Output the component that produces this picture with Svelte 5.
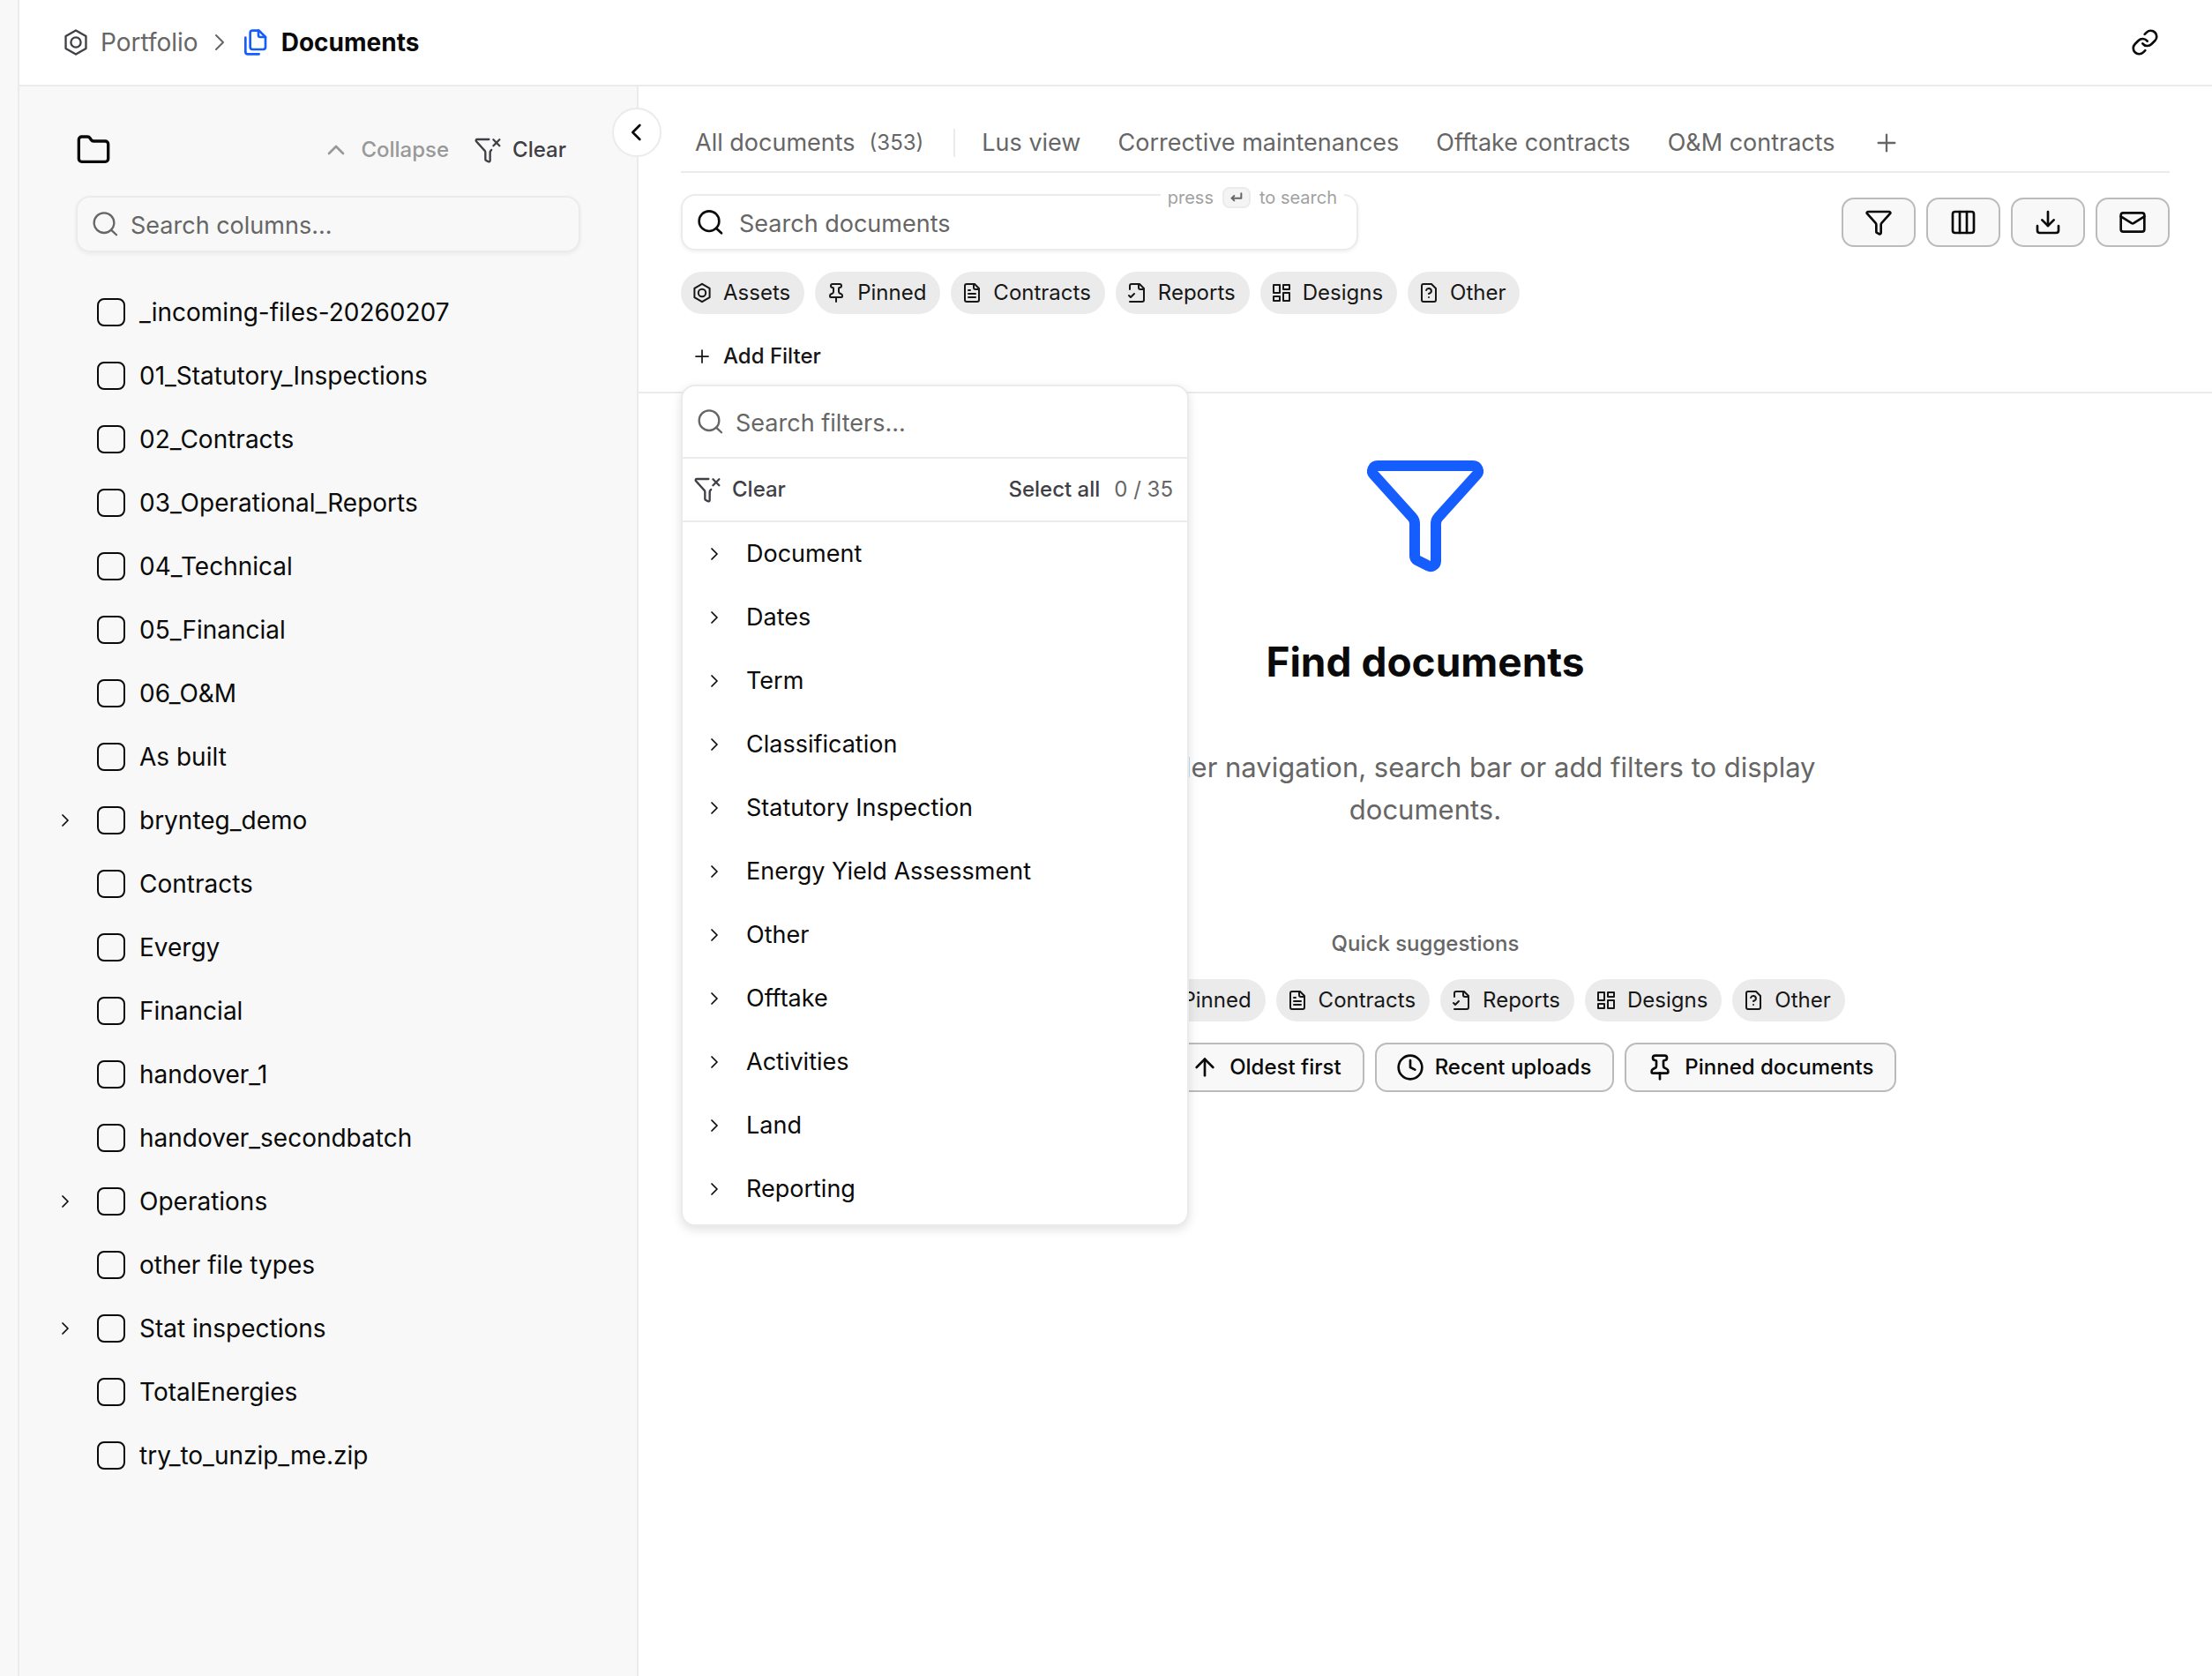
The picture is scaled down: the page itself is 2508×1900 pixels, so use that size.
<script>
	let folders = [
		{ name: '_incoming-files-20260207' },
		{ name: '01_Statutory_Inspections' },
		{ name: '02_Contracts' },
		{ name: '03_Operational_Reports' },
		{ name: '04_Technical' },
		{ name: '05_Financial' },
		{ name: '06_O&M' },
		{ name: 'As built' },
		{ name: 'brynteg_demo', children: true },
		{ name: 'Contracts' },
		{ name: 'Evergy' },
		{ name: 'Financial' },
		{ name: 'handover_1' },
		{ name: 'handover_secondbatch' },
		{ name: 'Operations', children: true },
		{ name: 'other file types' },
		{ name: 'Stat inspections', children: true },
		{ name: 'TotalEnergies' },
		{ name: 'try_to_unzip_me.zip' }
	];
	let chips = [
		{ icon: 'asset', label: 'Assets' },
		{ icon: 'pin', label: 'Pinned' },
		{ icon: 'file', label: 'Contracts' },
		{ icon: 'fileCheck', label: 'Reports' },
		{ icon: 'grid', label: 'Designs' },
		{ icon: 'fileQuestion', label: 'Other' }
	];
	let tabs = ['Lus view', 'Corrective maintenances', 'Offtake contracts', 'O&M contracts'];
	let tools = [
		{ icon: 'filter', label: 'Filter' },
		{ icon: 'columns', label: 'Columns' },
		{ icon: 'download', label: 'Download' },
		{ icon: 'mail', label: 'Mail' }
	];
	let filterGroups = ['Document', 'Dates', 'Term', 'Classification', 'Statutory Inspection', 'Energy Yield Assessment', 'Other', 'Offtake', 'Activities', 'Land', 'Reporting'];
	let quickActions = [
		{ icon: 'arrowDown', label: 'Newest first' },
		{ icon: 'arrowUp', label: 'Oldest first' },
		{ icon: 'clock', label: 'Recent uploads' },
		{ icon: 'pin', label: 'Pinned documents' }
	];

	// every icon is drawn on a 24x24 grid
	const icons = {
		asset: ['M12 1.8 20.6 6.8V17.2L12 22.2 3.4 17.2V6.8Z', 'M12 7.8a4.2 4.2 0 1 0 0 8.4a4.2 4.2 0 1 0 0-8.4Z'],
		copy: ['M14.5 2H10a2 2 0 0 0-2 2v12a2 2 0 0 0 2 2h9a2 2 0 0 0 2-2V7.5L15.5 2Z', 'M15 2v4a1.5 1.5 0 0 0 1.5 1.5h4.5', 'M4 8v12a2 2 0 0 0 2 2h9.5'],
		folder: ['M20 20a2 2 0 0 0 2-2V8a2 2 0 0 0-2-2h-7.9a2 2 0 0 1-1.7-.9L9.6 3.9A2 2 0 0 0 7.9 3H4a2 2 0 0 0-2 2v13a2 2 0 0 0 2 2Z'],
		search: ['M10.5 2.5a8.5 8.5 0 1 0 0 17a8.5 8.5 0 1 0 0-17Z', 'M16.5 17l4.5 4.2'],
		right: ['M9 18l6-6-6-6'],
		left: ['M14.5 18l-6-6 6-6'],
		up: ['M18 15l-6-6-6 6'],
		plus: ['M5 12h14', 'M12 5v14'],
		filter: ['M10 20a1 1 0 0 0 .55.9l2 1A1 1 0 0 0 14 21v-7a2 2 0 0 1 .52-1.34L21.74 4.67A1 1 0 0 0 21 3H3a1 1 0 0 0-.74 1.67l7.22 7.99A2 2 0 0 1 10 14Z'],
		filterX: ['M13 3H3a1 1 0 0 0-.74 1.67l7.22 7.99A2 2 0 0 1 10 14v6a1 1 0 0 0 .55.9l2 1A1 1 0 0 0 14 21v-7a2 2 0 0 1 .52-1.34l.6-.67', 'M16.8 3.2l5.2 5.2', 'M22 3.2l-5.2 5.2'],
		pin: ['M12 17v5', 'M9 10.8a2 2 0 0 1-1.1 1.8l-1.8.9A2 2 0 0 0 5 15.2V16a1 1 0 0 0 1 1h12a1 1 0 0 0 1-1v-.8a2 2 0 0 0-1.1-1.8l-1.8-.9A2 2 0 0 1 15 10.8V7a1 1 0 0 1 1-1 2 2 0 0 0 0-4H8a2 2 0 0 0 0 4 1 1 0 0 1 1 1Z'],
		file: ['M15 2H6a2 2 0 0 0-2 2v16a2 2 0 0 0 2 2h12a2 2 0 0 0 2-2V7Z', 'M14 2v4a2 2 0 0 0 2 2h4', 'M10 9H8', 'M16 13H8', 'M16 17H8'],
		fileCheck: ['M4 22h14a2 2 0 0 0 2-2V7l-5-5H6a2 2 0 0 0-2 2v4', 'M14 2v4a2 2 0 0 0 2 2h4', 'M3 15l2 2 4-4'],
		grid: ['M3 3h7v9H3Z', 'M14 3h7v5h-7Z', 'M14 12h7v9h-7Z', 'M3 16h7v5H3Z'],
		fileQuestion: ['M15 2H6a2 2 0 0 0-2 2v16a2 2 0 0 0 2 2h12a2 2 0 0 0 2-2V7Z', 'M12 17h.01', 'M9.1 9a3 3 0 0 1 5.82 1c0 2-3 3-3 3'],
		columns: ['M5 3h14a2 2 0 0 1 2 2v14a2 2 0 0 1-2 2H5a2 2 0 0 1-2-2V5a2 2 0 0 1 2-2Z', 'M9 3v18', 'M15 3v18'],
		download: ['M12 3v12', 'M7 10l5 5 5-5', 'M3 15v4a2 2 0 0 0 2 2h14a2 2 0 0 0 2-2v-4'],
		mail: ['M4 4h16a2 2 0 0 1 2 2v12a2 2 0 0 1-2 2H4a2 2 0 0 1-2-2V6a2 2 0 0 1 2-2Z', 'M22 7l-9 5.7a2 2 0 0 1-2 0L2 7'],
		link: ['M10 13a5 5 0 0 0 7.54.54l3-3a5 5 0 0 0-7.07-7.07l-1.72 1.71', 'M14 11a5 5 0 0 0-7.54-.54l-3 3a5 5 0 0 0 7.07 7.07l1.71-1.71'],
		arrowUp: ['M5 12l7-7 7 7', 'M12 19V5'],
		arrowDown: ['M12 5v14', 'M19 12l-7 7-7-7'],
		clock: ['M12 2a10 10 0 1 0 0 20a10 10 0 1 0 0-20Z', 'M12 6v6l4 2'],
		enter: ['M20 5v8H4', 'M8 9l-4 4 4 4']
	};
</script>

{#snippet icon(name, size, stroke = 1.75)}
	<svg class="icon" width={size} height={size} viewBox="0 0 24 24" stroke-width={stroke} aria-hidden="true">
		{#each icons[name] as d}
			<path {d} />
		{/each}
	</svg>
{/snippet}

{#snippet chipRow()}
	<div class="chips">
		{#each chips as chip}
			<button class="chip">{@render icon(chip.icon, 24, 2)}{chip.label}</button>
		{/each}
	</div>
{/snippet}

<div class="app">
	<div class="rail"></div>
	<div class="page">
		<header>
			<nav class="crumbs" aria-label="Breadcrumb">
				<a href="#portfolio">{@render icon('asset', 32)}Portfolio</a>
				<span class="sep">{@render icon('right', 32, 1.5)}</span>
				<a class="current" href="#documents">{@render icon('copy', 32, 2)}<span>Documents</span></a>
			</nav>
			<button class="plain" aria-label="Copy link">{@render icon('link', 32, 2)}</button>
		</header>

		<div class="body">
			<aside>
				<button class="toggle" aria-label="Hide folders">{@render icon('left', 32, 2)}</button>
				<div class="side-head">
					{@render icon('folder', 40, 2)}
					<div class="side-actions">
						<button class="plain muted" disabled>{@render icon('up', 32, 2)}Collapse</button>
						<button class="plain clear">{@render icon('filterX', 32)}Clear</button>
					</div>
				</div>
				<label class="field side-search">
					{@render icon('search', 32)}
					<input type="text" placeholder="Search columns..." aria-label="Search columns" />
				</label>
				<ul class="tree">
					{#each folders as folder}
						<li>
							{#if folder.children}
								<button class="plain expand" aria-label="Expand {folder.name}">{@render icon('right', 24)}</button>
							{:else}
								<span class="expand"></span>
							{/if}
							<label><input type="checkbox" />{folder.name}</label>
						</li>
					{/each}
				</ul>
			</aside>

			<main>
				<section class="top">
					<nav class="tabs" aria-label="Views">
						<a class="all" href="#all">All documents <span class="count">(353)</span></a>
						{#each tabs as tab}
							<a href="#view">{tab}</a>
						{/each}
						<button class="plain" aria-label="Add view">{@render icon('plus', 32)}</button>
					</nav>
					<div class="bar">
						<label class="field doc-search">
							{@render icon('search', 32, 2)}
							<input type="text" placeholder="Search documents" aria-label="Search documents" />
							<span class="hint">press <kbd>{@render icon('enter', 16, 3)}</kbd> to search</span>
						</label>
						<div class="tools">
							{#each tools as tool}
								<button class="box" aria-label={tool.label}>{@render icon(tool.icon, 32, 2)}</button>
							{/each}
						</div>
					</div>
					{@render chipRow()}
					<div class="add-wrap">
						<button class="plain add">{@render icon('plus', 24)}Add Filter</button>
						<div class="menu">
							<label class="menu-search">
								{@render icon('search', 32)}
								<input type="text" placeholder="Search filters..." aria-label="Search filters" />
							</label>
							<div class="menu-actions">
								<button class="plain clear">{@render icon('filterX', 32)}Clear</button>
								<button class="plain select-all">Select all</button>
								<span>0 / 35</span>
							</div>
							{#each filterGroups as group}
								<button class="group">{@render icon('right', 24)}{group}</button>
							{/each}
						</div>
					</div>
				</section>

				<section class="empty">
					<div class="hero">{@render icon('filter', 144, 2)}</div>
					<h1>Find documents</h1>
					<p>Use the folder navigation, search bar or add filters to display documents.</p>
					<h2>Quick suggestions</h2>
					{@render chipRow()}
					<div class="quick">
						{#each quickActions as action}
							<button class="box">{@render icon(action.icon, 32, 2)}{action.label}</button>
						{/each}
					</div>
				</section>
			</main>
		</div>
	</div>
</div>

<style>
	:global(body) {
		background: #fff;
	}
	.app {
		display: flex;
		min-height: 100vh;
		font-family: Inter, "Liberation Sans", sans-serif;
		font-size: 27px;
		line-height: 40px;
		color: #0a0a0a;
	}
	.app * {
		box-sizing: border-box;
	}
	button,
	input {
		font: inherit;
		color: inherit;
	}
	button {
		display: flex;
		align-items: center;
		cursor: pointer;
		white-space: nowrap;
	}
	a {
		color: inherit;
		text-decoration: none;
		white-space: nowrap;
	}
	.icon {
		flex: none;
		display: block;
		fill: none;
		stroke: currentColor;
		stroke-linecap: round;
		stroke-linejoin: round;
	}
	.plain {
		padding: 0;
		border: 0;
		background: none;
	}
	.rail {
		flex: none;
		width: 22px;
		background: #f8f8f8;
		border-right: 2px solid #ebebeb;
	}
	.page {
		flex: 1;
		display: flex;
		flex-direction: column;
		min-width: 0;
	}
	header {
		display: flex;
		align-items: center;
		justify-content: space-between;
		height: 98px;
		padding: 0 60px 0 48px;
		border-bottom: 2px solid #ebebeb;
		font-size: 28px;
	}
	.crumbs,
	.crumbs a {
		display: flex;
		align-items: center;
	}
	.crumbs {
		gap: 8px;
	}
	.crumbs a {
		gap: 12px;
		color: #666;
	}
	.crumbs a .icon {
		color: #3f3f46;
	}
	.crumbs .sep {
		color: #666;
	}
	.crumbs .current {
		gap: 14px;
		color: #0a0a0a;
		font-weight: 700;
	}
	.crumbs .current .icon {
		color: #155dfc;
	}
	.body {
		flex: 1;
		display: flex;
	}
	aside {
		position: relative;
		flex: none;
		width: 702px;
		padding: 40px 64px 48px 48px;
		background: #f8f8f8;
		border-right: 2px solid #ebebeb;
	}
	.toggle {
		position: absolute;
		top: 24px;
		right: -28px;
		justify-content: center;
		width: 56px;
		height: 56px;
		padding: 0;
		border: 2px solid #ebebeb;
		border-radius: 50%;
		background: #fff;
	}
	.side-head {
		display: flex;
		align-items: center;
		justify-content: space-between;
		height: 64px;
		padding: 0 16px;
	}
	.side-actions {
		display: flex;
		gap: 28px;
		font-size: 24px;
		font-weight: 500;
	}
	.side-actions button {
		gap: 12px;
	}
	.muted {
		color: #999;
	}
	.clear,
	.select-all {
		color: #3f3f46;
	}
	.field {
		display: flex;
		align-items: center;
		gap: 12px;
		height: 64px;
		padding: 0 16px;
		border: 2px solid #ebebeb;
		border-radius: 16px;
		box-shadow: 0 2px 4px rgba(0, 0, 0, 0.06);
	}
	.field input,
	.menu-search input {
		flex: 1;
		min-width: 0;
		padding: 4px 0 0;
		border: 0;
		outline: 0;
		background: none;
	}
	input::placeholder {
		color: #666;
		opacity: 1;
	}
	.side-search {
		margin: 20px 0 32px 16px;
		color: #666;
	}
	.tree {
		margin: 0 0 0 -8px;
		padding: 0;
		list-style: none;
		font-size: 28px;
	}
	.tree li,
	.tree label {
		display: flex;
		align-items: center;
		height: 72px;
	}
	.tree label {
		gap: 16px;
	}
	.expand {
		width: 48px;
	}
	.tree input {
		appearance: none;
		width: 32px;
		height: 32px;
		margin: 0;
		border: 2px solid #0a0a0a;
		border-radius: 8px;
	}
	main {
		flex: 1;
		min-width: 0;
	}
	.top {
		padding: 32px 48px 16px;
		border-bottom: 2px solid #ebebeb;
	}
	.tabs {
		display: flex;
		align-items: center;
		gap: 42px;
		height: 66px;
		padding: 0 16px;
		border-bottom: 2px solid #ebebeb;
		color: #666;
	}
	.tabs .all {
		display: flex;
		gap: 16px;
		padding-right: 34px;
		margin-right: -12px;
		border-right: 2px solid #ebebeb;
		line-height: 32px;
	}
	.count {
		font-size: 24px;
	}
	.bar {
		display: flex;
		align-items: center;
		justify-content: space-between;
		margin: 24px 0;
	}
	.doc-search {
		position: relative;
		gap: 16px;
		width: 768px;
	}
	.doc-search > .icon {
		color: #0a0a0a;
	}
	.hint {
		position: absolute;
		top: -14px;
		right: 14px;
		display: flex;
		align-items: center;
		gap: 10px;
		padding: 0 8px;
		background: #fff;
		color: #a1a1a1;
		font-size: 20px;
		line-height: 32px;
	}
	kbd {
		display: flex;
		align-items: center;
		justify-content: center;
		width: 32px;
		height: 24px;
		border: 2px solid #ebebeb;
		border-radius: 8px;
		background: #f4f4f5;
		color: #666;
	}
	.tools,
	.chips,
	.quick {
		display: flex;
		gap: 12px;
	}
	.box {
		gap: 12px;
		height: 56px;
		padding: 0 24px;
		border: 2px solid #bbb;
		border-radius: 14px;
		background: #f8f8f8;
		font-size: 24px;
		font-weight: 500;
	}
	.chip {
		gap: 12px;
		height: 48px;
		padding: 0 16px 0 12px;
		border: 0;
		border-radius: 24px;
		background: #ebebeb;
		color: #171717;
		font-size: 24px;
	}
	.add-wrap {
		position: relative;
		margin-top: 24px;
	}
	.add {
		gap: 12px;
		height: 48px;
		padding: 0 12px;
		color: #171717;
		font-size: 24px;
		font-weight: 500;
	}
	.menu {
		position: absolute;
		top: 56px;
		left: 0;
		z-index: 1;
		width: 576px;
		padding-bottom: 4px;
		border: 2px solid #ebebeb;
		border-radius: 16px;
		background: #fff;
		box-shadow: 0 4px 12px rgba(0, 0, 0, 0.12);
	}
	.menu-search,
	.menu-actions {
		display: flex;
		align-items: center;
		gap: 12px;
		padding: 0 16px;
		border-bottom: 2px solid #ebebeb;
		color: #666;
	}
	.menu-search {
		height: 82px;
	}
	.menu-actions {
		gap: 16px;
		height: 72px;
		padding: 0 16px 0 12px;
		font-size: 24px;
	}
	.menu-actions button {
		gap: 12px;
		font-weight: 500;
	}
	.select-all {
		margin-left: auto;
	}
	.group {
		gap: 24px;
		width: 100%;
		height: 72px;
		padding: 0 24px;
		border: 0;
		background: none;
	}
	.empty {
		display: flex;
		flex-direction: column;
		align-items: center;
		padding: 64px 48px;
	}
	.hero {
		color: #155dfc;
	}
	h1 {
		margin: 64px 0;
		font-size: 46px;
		font-weight: 700;
		line-height: 64px;
	}
	p {
		max-width: 896px;
		margin: 0;
		color: #666;
		font-size: 31px;
		line-height: 48px;
		text-align: center;
	}
	h2 {
		margin: 112px 0 24px;
		color: #666;
		font-size: 24px;
		font-weight: 500;
		line-height: 32px;
	}
	.quick {
		margin-top: 24px;
	}
	.quick .box {
		padding-left: 22px;
	}
</style>
